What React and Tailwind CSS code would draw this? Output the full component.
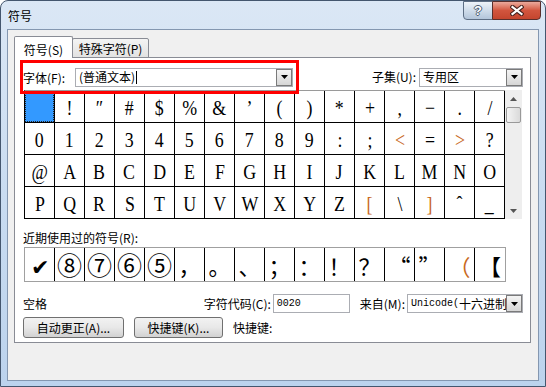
const UI = "font-['Noto_Sans_CJK_SC',sans-serif] text-[12px] text-black";

const ORANGE = ['<', '>', '[', ']'];

const rows = [
  [' ', '!', '″', '#', '$', '%', '&', '’', '(', ')', '*', '+', ',', '−', '.', '/'],
  ['0', '1', '2', '3', '4', '5', '6', '7', '8', '9', ':', ';', '<', '=', '>', '?'],
  ['@', 'A', 'B', 'C', 'D', 'E', 'F', 'G', 'H', 'I', 'J', 'K', 'L', 'M', 'N', 'O'],
  ['P', 'Q', 'R', 'S', 'T', 'U', 'V', 'W', 'X', 'Y', 'Z', '[', '\\', ']', 'ˆ', '_'],
];

const recent = ['✔', '⑧', '⑦', '⑥', '⑤', '，', '。', '、', '；', '：', '！', '？', '“', '”', '（', '【'];
const CIRCLED = ['⑧', '⑦', '⑥', '⑤'];

function DownTri() {
  return (
    <svg width="7" height="4" viewBox="0 0 7 4">
      <path d="M0 0 H7 L3.5 4 Z" fill="#000" />
    </svg>
  );
}

// old style combo box: white field + small gradient button
function Combo({ text, width, caret, mono }) {
  return (
    <div className={`${width} h-[19px] border border-[#abadb3] bg-white flex items-center overflow-hidden`}>
      <div className={`flex-1 flex items-center pl-[3px] whitespace-nowrap overflow-hidden ${mono ? "font-['Liberation_Mono',monospace] text-[10px]" : ''}`}>
        {text}
        {caret && <span className="inline-block w-px h-[13px] bg-black ml-[1px]" />}
      </div>
      <div className="w-[16px] h-[17px] shrink-0 border border-[#7a7a7a] bg-gradient-to-b from-[#f4f4f4] to-[#d6d6d6] flex items-center justify-center">
        <DownTri />
      </div>
    </div>
  );
}

function Button({ children, width }) {
  return (
    <div className={`${width} h-[21px] rounded-[3px] border border-[#707070] bg-gradient-to-b from-[#f2f2f2] via-[#e8e8e8] to-[#d2d2d2] flex items-center justify-center`}>
      {children}
    </div>
  );
}

export default function App() {
  return (
    <div className={`w-[546px] h-[387px] bg-white overflow-hidden ${UI}`}>
      <div className="w-full h-full rounded-t-[8px] border border-[#44566e] bg-gradient-to-b from-[#dbe7f5] via-[#c9dcf1] to-[#bcd3ed] flex flex-col">
        {/* Title bar */}
        <div className="h-[28px] flex justify-between">
          <div className="pl-[7px] pt-[8px] text-[12px] leading-[14px]">符号</div>
          <div className="flex mr-[4px] h-[19px]">
            <div className="w-[30px] h-[19px] border border-[#5d6e84] rounded-bl-[4px] bg-gradient-to-b from-[#eef3f9] via-[#cfdcea] to-[#b3c5da] flex items-center justify-center">
              <span className="font-['Liberation_Sans',sans-serif] font-bold text-[13px] leading-none text-white [text-shadow:1px_0_#4b5b70,-1px_0_#4b5b70,0_1px_#4b5b70,0_-1px_#4b5b70]">?</span>
            </div>
            <div className="w-[49px] h-[19px] -ml-px border border-[#5a2f2c] rounded-br-[4px] bg-gradient-to-b from-[#eaa99c] via-[#d2553e] to-[#c4452e] flex items-center justify-center">
              <svg width="14" height="11" viewBox="0 0 14 11">
                <path d="M2.5 2 L11.5 9 M11.5 2 L2.5 9" stroke="#47221f" strokeWidth="4.2" strokeLinecap="square" />
                <path d="M2.5 2 L11.5 9 M11.5 2 L2.5 9" stroke="#fff" strokeWidth="2.2" strokeLinecap="square" />
              </svg>
            </div>
          </div>
        </div>

        {/* Client area */}
        <div className="mx-[6px] h-[352px] border border-[#8497b0] bg-[#f0f0f0] pt-[6px] pl-[6px]">
          {/* Tabs */}
          <div className="flex items-end relative z-10 -mb-px">
            <div className="w-[59px] h-[22px] border border-b-0 border-[#898c95] rounded-t-[2px] bg-white flex items-center justify-center pt-[4px]">
              符号(S)
            </div>
            <div className="w-[77px] h-[20px] -ml-px border border-[#898c95] rounded-t-[2px] bg-gradient-to-b from-[#f4f4f4] to-[#e2e2e2] flex items-center justify-center pt-[2px]">
              特殊字符(P)
            </div>
          </div>

          {/* Panel */}
          <div className="w-[517px] h-[286px] border border-[#898c95] bg-white flex flex-col">
            {/* Font row */}
            <div className="flex items-center mt-[2px]">
              <div className="ml-[5px] w-[279px] h-[34px] border-[3px] border-[#ff0000] relative z-10 flex items-center">
                <div className="w-[52px] pt-[2px]">字体(F):</div>
                <Combo text="(普通文本)" width="w-[218px]" caret />
              </div>
              <div className="ml-auto mr-[7px] flex items-center">
                <div className="mr-[3px]">子集(U):</div>
                <Combo text="专用区" width="w-[104px]" />
              </div>
            </div>

            {/* Symbol grid */}
            <div className="flex ml-[9px] -mt-[4px]">
              <div className="border-l border-t border-l-black border-t-[#9a9a9a] grid grid-cols-[repeat(16,30px)]">
                {rows.flat().map((ch, i) => (
                  <div
                    key={i}
                    className="w-[30px] h-[32px] border-r border-b border-black flex items-center justify-center font-['Liberation_Serif',serif] text-[21px] leading-none"
                  >
                    {i === 0 ? (
                      <div className="w-full h-full bg-[#3399ff] border border-dotted border-[#222]" />
                    ) : (
                      <span className={`inline-block scale-x-[0.85] pt-[3px] ${ORANGE.includes(ch) ? 'text-[#c8681c]' : 'text-black'}`}>
                        {ch}
                      </span>
                    )}
                  </div>
                ))}
              </div>
              <div className="w-[17px] bg-[#eeeeee] flex flex-col items-center">
                <div className="h-[17px] flex items-center justify-center">
                  <svg width="7" height="4" viewBox="0 0 7 4">
                    <path d="M0 4 H7 L3.5 0 Z" fill="#555" />
                  </svg>
                </div>
                <div className="w-[15px] h-[16px] rounded-[2px] border border-[#999] bg-gradient-to-r from-[#f4f4f4] to-[#dadada]" />
                <div className="flex-1" />
                <div className="h-[17px] flex items-center justify-center">
                  <svg width="7" height="4" viewBox="0 0 7 4">
                    <path d="M0 0 H7 L3.5 4 Z" fill="#555" />
                  </svg>
                </div>
              </div>
            </div>

            {/* Recently used */}
            <div className="mt-[12px] ml-[8px] h-[14px] leading-[14px]">近期使用过的符号(R):</div>
            <div className="mt-[2px] ml-[9px] w-[482px] h-[35px] border border-[#a0a0a0] flex">
              {recent.map((ch, i) => (
                <div
                  key={i}
                  className={`w-[30px] h-full flex items-center justify-center leading-none ${CIRCLED.includes(ch) ? 'text-[25px]' : 'text-[22px]'} ${i < recent.length - 1 ? 'border-r border-black' : ''} ${ch === '（' ? 'text-[#c8681c]' : 'text-black'}`}
                >
                  {ch}
                </div>
              ))}
            </div>

            {/* Code row */}
            <div className="mt-[12px] h-[19px] flex items-center">
              <div className="ml-[8px] flex-1">空格</div>
              <div className="mr-[2px]">字符代码(C):</div>
              <div className="w-[77px] h-[19px] border border-[#abadb3] bg-white flex items-center pl-[3px] font-['Liberation_Mono',monospace] text-[10px]">
                0020
              </div>
              <div className="ml-[10px] mr-[2px]">来自(M):</div>
              <div className="mr-[7px]">
                <Combo text={<>Unicode(<span className="font-['Noto_Sans_CJK_SC',sans-serif] text-[12px]">十六进制</span></>} width="w-[116px]" mono />
              </div>
            </div>

            {/* Buttons */}
            <div className="mt-[4px] ml-[8px] flex items-center gap-[10px]">
              <Button width="w-[101px]">自动更正(A)...</Button>
              <Button width="w-[89px]">快捷键(K)...</Button>
              <div>快捷键:</div>
            </div>
          </div>
        </div>
      </div>
    </div>
  );
}
